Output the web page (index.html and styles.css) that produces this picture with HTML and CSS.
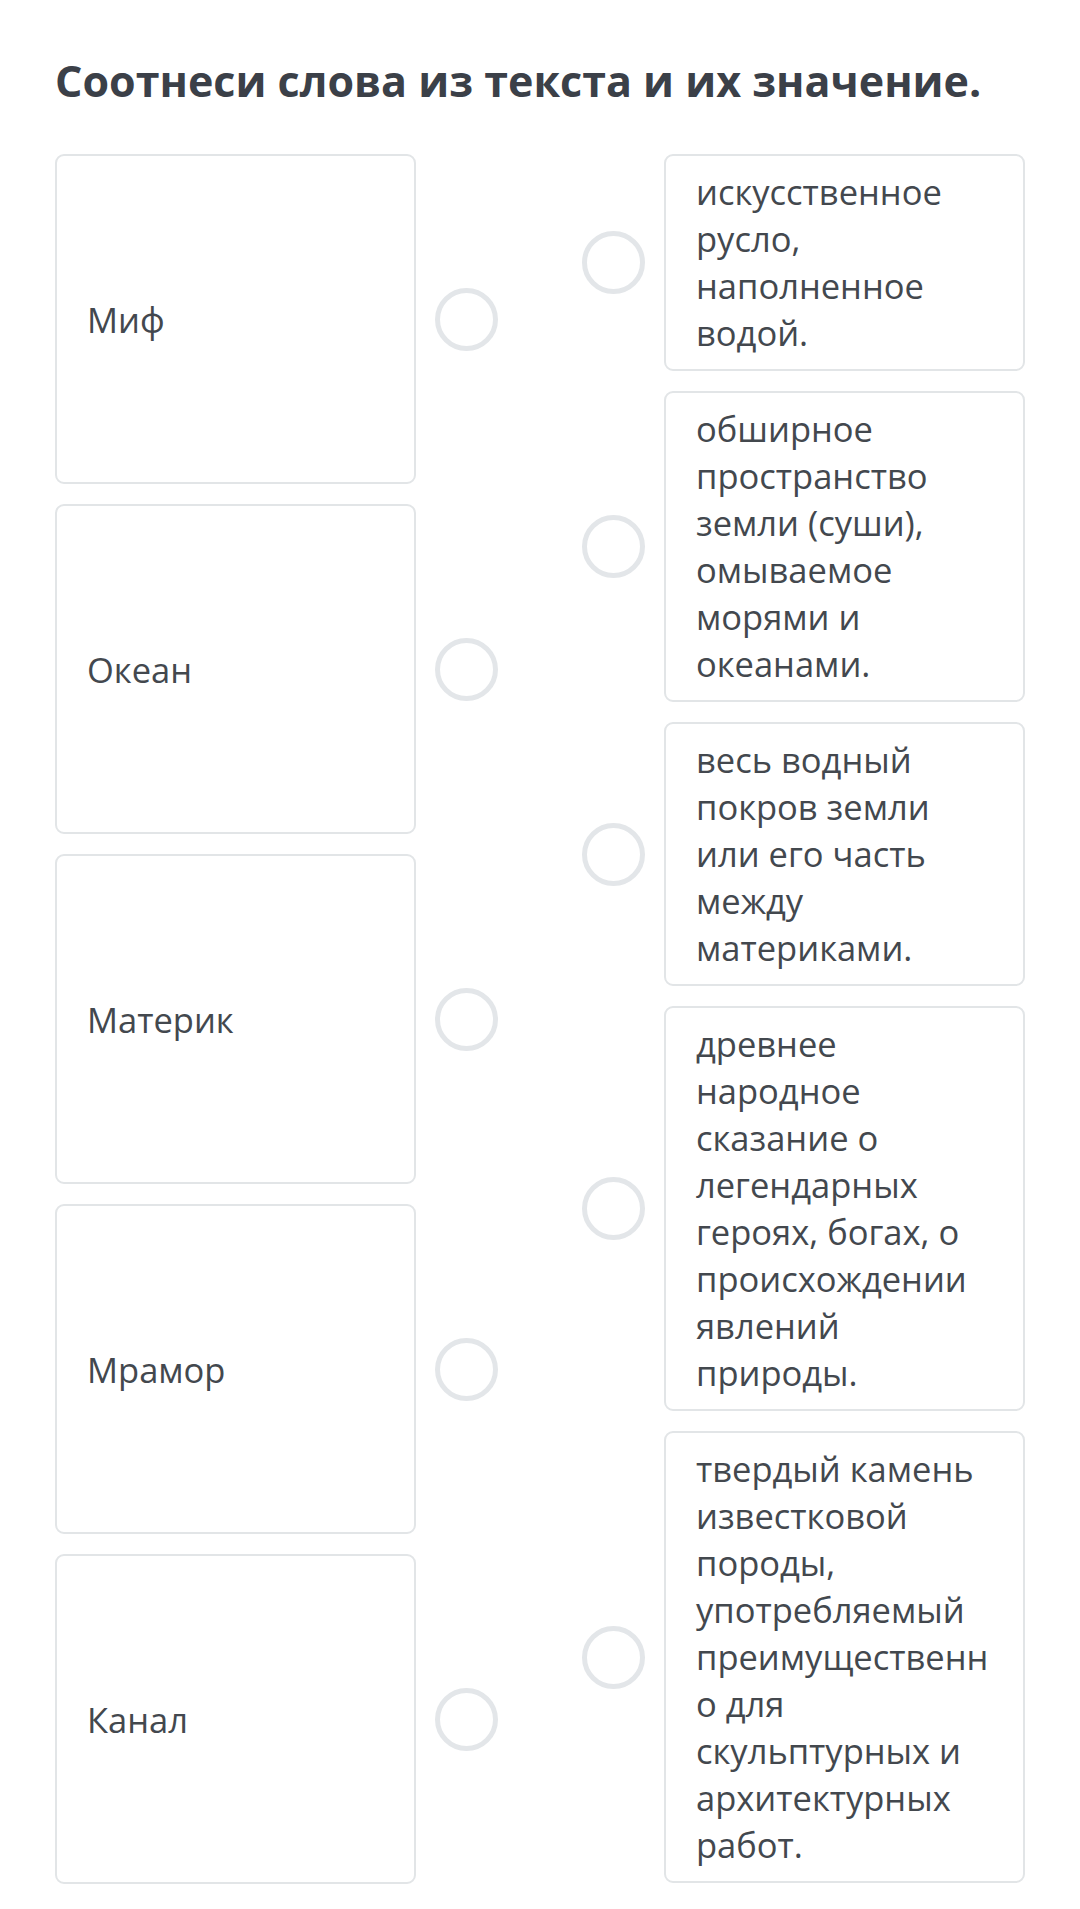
FILE: index.html
```html
<!DOCTYPE html>
<html lang="ru">
<head>
<meta charset="utf-8">
<title>Соотнеси слова</title>
<link rel="stylesheet" href="styles.css">
</head>
<body>
<main class="page">
  <h1 class="title">Соотнеси слова из текста и их значение.</h1>
  <div class="match">
    <div class="col col-left">
      <div class="item"><div class="card card-term">Миф</div><span class="dot"></span></div>
      <div class="item"><div class="card card-term">Океан</div><span class="dot"></span></div>
      <div class="item"><div class="card card-term">Материк</div><span class="dot"></span></div>
      <div class="item"><div class="card card-term">Мрамор</div><span class="dot"></span></div>
      <div class="item"><div class="card card-term">Канал</div><span class="dot"></span></div>
    </div>
    <div class="col col-right">
      <div class="item"><span class="dot"></span><div class="card card-def">искусственное русло, наполненное водой.</div></div>
      <div class="item"><span class="dot"></span><div class="card card-def">обширное пространство земли (суши), омываемое морями и океанами.</div></div>
      <div class="item"><span class="dot"></span><div class="card card-def">весь водный покров земли или его часть между материками.</div></div>
      <div class="item"><span class="dot"></span><div class="card card-def">древнее народное сказание о легендарных героях, богах, о происхождении явлений природы.</div></div>
      <div class="item"><span class="dot"></span><div class="card card-def">твердый камень известковой породы, употребляемый преимущественно для скульптурных и архитектурных работ.</div></div>
    </div>
  </div>
</main>
</body>
</html>
```
FILE: styles.css
```css
html, body {
  margin: 0;
  padding: 0;
  background: #ffffff;
}
body {
  font-family: "Open Sans", "Noto Sans", sans-serif;
  color: #3f444a;
}
.page {
  width: 970px;
  margin: 0 auto;
  padding-top: 56px;
}
.title {
  margin: 0 0 48px 0;
  font-size: 43px;
  line-height: 50px;
  font-weight: 700;
  color: #3b4048;
  letter-spacing: 0;
}
.match {
  display: flex;
  justify-content: space-between;
}
.col {
  display: flex;
  flex-direction: column;
  gap: 20px;
  width: 443px;
}
.item {
  display: flex;
  align-items: center;
  gap: 19px;
}
.card {
  box-sizing: border-box;
  width: 361px;
  flex: none;
  border: 2px solid #e2e5e7;
  border-radius: 9px;
  background: #ffffff;
  font-size: 34.5px;
  line-height: 47px;
  color: #43484e;
}
.card-term {
  height: 330px;
  display: flex;
  align-items: center;
  padding: 0 30px 0 30px;
}
.card-def {
  padding: 12px 22px 13px 30px;
  overflow-wrap: anywhere;
}
.dot {
  box-sizing: border-box;
  flex: none;
  width: 63px;
  height: 63px;
  border-radius: 50%;
  border: 5px solid #e3e6e9;
}
```
